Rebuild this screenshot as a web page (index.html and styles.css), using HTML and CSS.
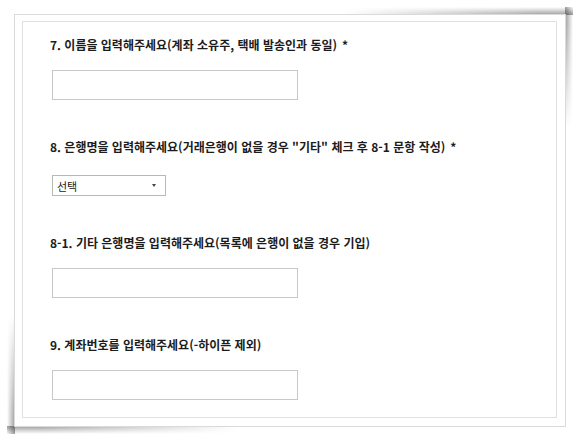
FILE: index.html
```html
<!DOCTYPE html>
<html lang="ko">
<head>
<meta charset="utf-8">
<link rel="stylesheet" href="styles.css">
</head>
<body>
<div class="frame">
  <div class="panel">
    <div class="question">
      <div class="label">7. 이름을 입력해주세요(계좌 소유주, 택배 발송인과 동일)<span class="req">*</span></div>
      <div class="input"></div>
    </div>
    <div class="question select-q">
      <div class="label">8. 은행명을 입력해주세요(거래은행이 없을 경우 "기타" 체크 후 8-1 문항 작성)<span class="req">*</span></div>
      <div class="select"><span>선택</span><span class="arrow"></span></div>
    </div>
    <div class="question">
      <div class="label">8-1. 기타 은행명을 입력해주세요(목록에 은행이 없을 경우 기입)</div>
      <div class="input"></div>
    </div>
    <div class="question">
      <div class="label">9. 계좌번호를 입력해주세요(-하이픈 제외)</div>
      <div class="input"></div>
    </div>
  </div>
</div>
</body>
</html>
```
FILE: styles.css
```css
html, body {
  margin: 0;
  padding: 0;
}
html {
  background: #fff;
}
body {
  padding: 14px;
  font-family: "Noto Sans CJK KR", "Noto Sans", sans-serif;
  color: #1c1c1c;
}
.frame {
  position: relative;
  width: 552px;
  height: 413px;
  box-sizing: border-box;
  border: 1px solid #dadada;
  background: #fff;
  padding: 6px 8px 8px 7px;
}
.frame::before,
.frame::after {
  content: "";
  position: absolute;
  z-index: -1;
  width: 260px;
  height: 260px;
}
.frame::before {
  top: -8px;
  right: -8px;
  background:
    linear-gradient(to top, rgba(0,0,0,0.38), rgba(0,0,0,0)) top left / 100% 8px no-repeat,
    linear-gradient(to right, rgba(0,0,0,0.38), rgba(0,0,0,0)) top right / 8px 100% no-repeat;
  -webkit-mask-image: radial-gradient(ellipse 230px 120px at 100% 0, #000 15%, transparent 100%);
  mask-image: radial-gradient(ellipse 230px 120px at 100% 0, #000 15%, transparent 100%);
}
.frame::after {
  bottom: -8px;
  left: -8px;
  background:
    linear-gradient(to bottom, rgba(0,0,0,0.38), rgba(0,0,0,0)) bottom left / 100% 8px no-repeat,
    linear-gradient(to left, rgba(0,0,0,0.38), rgba(0,0,0,0)) bottom left / 8px 100% no-repeat;
  -webkit-mask-image: radial-gradient(ellipse 230px 120px at 0 100%, #000 15%, transparent 100%);
  mask-image: radial-gradient(ellipse 230px 120px at 0 100%, #000 15%, transparent 100%);
}
.panel {
  height: 100%;
  box-sizing: border-box;
  border: 1px solid #e0e0e0;
  padding: 14px 0 0 27px;
  display: flex;
  flex-direction: column;
  gap: 38px;
}
.question {
  display: flex;
  flex-direction: column;
  gap: 17px;
}
.select-q {
  gap: 20px;
}
.label {
  font-size: 12px;
  font-weight: 700;
  line-height: 17px;
  height: 17px;
  white-space: nowrap;
}
.req {
  margin-left: 5px;
}
.input {
  margin-left: 2px;
  width: 246px;
  height: 30px;
  box-sizing: border-box;
  border: 1px solid #c8c8c8;
  background: #fff;
}
.select {
  margin-left: 2px;
  width: 114px;
  height: 21px;
  box-sizing: border-box;
  border: 1px solid #b8b8b8;
  display: flex;
  align-items: center;
  justify-content: space-between;
  padding: 0 9px 0 4px;
  font-size: 11px;
  color: #222;
}
.arrow {
  width: 0;
  height: 0;
  border-left: 2.5px solid transparent;
  border-right: 2.5px solid transparent;
  border-top: 3px solid #444;
}
```
